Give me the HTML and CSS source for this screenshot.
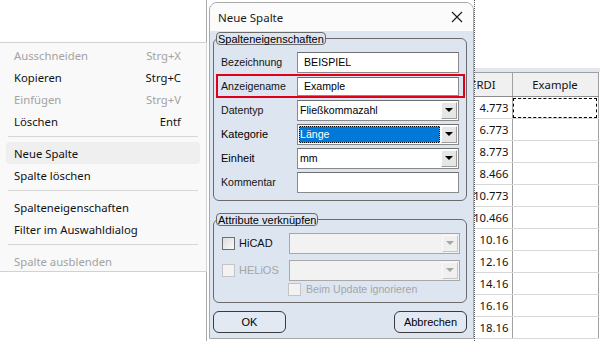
FILE: index.html
```html
<!DOCTYPE html>
<html lang="de">
  <head>
    <meta charset="UTF-8" />
    <title>Neue Spalte</title>
    <link rel="stylesheet" href="styles.css">
  </head>
  <body>
    <div class="desk">
      <div class="vline vline-left"></div>

      <div class="sheet">
        <div class="sheet-bar"></div>
        <table class="grid">
          <thead>
            <tr>
              <th class="col-a">ERDI</th>
              <th class="col-b">Example</th>
            </tr>
          </thead>
          <tbody>
            <tr><td class="col-a">4.773</td><td class="col-b focus"></td></tr>
            <tr><td class="col-a">6.773</td><td class="col-b"></td></tr>
            <tr><td class="col-a">8.773</td><td class="col-b"></td></tr>
            <tr><td class="col-a">8.466</td><td class="col-b"></td></tr>
            <tr><td class="col-a">10.773</td><td class="col-b"></td></tr>
            <tr><td class="col-a">10.466</td><td class="col-b"></td></tr>
            <tr><td class="col-a">10.16</td><td class="col-b"></td></tr>
            <tr><td class="col-a">12.16</td><td class="col-b"></td></tr>
            <tr><td class="col-a">14.16</td><td class="col-b"></td></tr>
            <tr><td class="col-a">16.16</td><td class="col-b"></td></tr>
            <tr><td class="col-a">18.16</td><td class="col-b"></td></tr>
          </tbody>
        </table>
      </div>
      <div class="vline vline-right"></div>

      <div class="menu">
        <div class="item disabled"><span>Ausschneiden</span><span>Strg+X</span></div>
        <div class="item"><span>Kopieren</span><span>Strg+C</span></div>
        <div class="item disabled"><span>Einfügen</span><span>Strg+V</span></div>
        <div class="item"><span>Löschen</span><span>Entf</span></div>
        <div class="sep"></div>
        <div class="item hover"><span>Neue Spalte</span></div>
        <div class="item"><span>Spalte löschen</span></div>
        <div class="sep"></div>
        <div class="item"><span>Spalteneigenschaften</span></div>
        <div class="item"><span>Filter im Auswahldialog</span></div>
        <div class="sep"></div>
        <div class="item disabled"><span>Spalte ausblenden</span></div>
      </div>

      <div class="dialog">
        <div class="titlebar">
          <span class="title">Neue Spalte</span>
          <svg class="close" width="12" height="12" viewBox="0 0 12 12">
            <path d="M1 1 L11 11 M11 1 L1 11" stroke="#1a1a1a" stroke-width="1.1" fill="none" />
          </svg>
        </div>

        <div class="dialog-body">
          <fieldset class="group">
            <legend>Spalteneigenschaften</legend>
            <div class="rows">
              <div class="row">
                <label>Bezeichnung</label>
                <div class="field">BEISPIEL</div>
              </div>
              <div class="row marked">
                <label>Anzeigename</label>
                <div class="field short">Example</div>
              </div>
              <div class="row">
                <label>Datentyp</label>
                <div class="combo">
                  <span class="combo-text">Fließkommazahl</span>
                  <span class="drop"><i></i></span>
                </div>
              </div>
              <div class="row">
                <label class="strong">Kategorie</label>
                <div class="combo">
                  <span class="combo-text selected">Länge</span>
                  <span class="drop"><i></i></span>
                </div>
              </div>
              <div class="row">
                <label class="strong">Einheit</label>
                <div class="combo">
                  <span class="combo-text">mm</span>
                  <span class="drop"><i></i></span>
                </div>
              </div>
              <div class="row">
                <label>Kommentar</label>
                <div class="field"></div>
              </div>
            </div>
          </fieldset>

          <fieldset class="group links">
            <legend>Attribute verknüpfen</legend>
            <div class="rows">
              <div class="row check-row">
                <span class="check"></span>
                <span class="check-label">HiCAD</span>
                <div class="combo wide off">
                  <span class="combo-text"></span>
                  <span class="drop"><i></i></span>
                </div>
              </div>
              <div class="row check-row second">
                <span class="check off"></span>
                <span class="check-label off">HELiOS</span>
                <div class="combo wide off">
                  <span class="combo-text"></span>
                  <span class="drop"><i></i></span>
                </div>
              </div>
              <div class="row update-row">
                <span class="check off"></span>
                <span class="check-label off">Beim Update ignorieren</span>
              </div>
            </div>
          </fieldset>

          <div class="buttons">
            <button>OK</button>
            <button>Abbrechen</button>
          </div>
        </div>
      </div>
    </div>
  </body>
</html>
```

FILE: styles.css
```css
body {
  margin: 0;
  background: #ffffff;
  color: #000;
  font-family: "Segoe UI", "Noto Sans", sans-serif;
}

.desk {
  position: relative;
  width: 600px;
  height: 341px;
  overflow: hidden;
}

.vline {
  position: absolute;
  top: 0;
  bottom: 0;
  width: 1px;
}

.vline-left {
  left: 206px;
  background: #a8a8a8;
}

.vline-right {
  left: 474px;
  border-left: 1px dotted #555;
}

/* table behind the dialog */
.sheet {
  position: absolute;
  left: 430px;
  top: 68px;
  width: 170px;
}

.sheet-bar {
  height: 4px;
  background: #e2e7ef;
}

.grid {
  border-collapse: collapse;
  font-size: 11.3px;
  color: #111;
}

.grid th {
  height: 24px;
  padding: 0;
  background: #f0f0f0;
  font-weight: normal;
  border-top: 1px solid #a0a0a0;
  border-bottom: 1px solid #8c8c8c;
  border-right: 1px solid #a0a0a0;
  box-sizing: border-box;
}

.grid th.col-a {
  text-align: right;
  padding-right: 16px;
}

.grid td {
  height: 21px;
  padding: 0;
  border-bottom: 1px solid #d8d8d8;
  border-right: 1px solid #a0a0a0;
}

.grid td.col-a {
  padding-right: 3px;
}

.col-a {
  width: 82px;
  text-align: right;
  box-sizing: border-box;
}

.col-b {
  width: 85px;
}

.grid td.focus {
  outline: 1px dashed #000;
  outline-offset: -2px;
}

/* context menu */
.menu {
  position: absolute;
  left: 0;
  top: 42px;
  width: 207px;
  height: 230px;
  box-sizing: border-box;
  padding-top: 1px;
  background: #f9f9f9;
  border: 1px solid #d2d2d2;
  border-left: none;
  font-size: 11.3px;
}

.item {
  height: 22px;
  display: flex;
  align-items: center;
  justify-content: space-between;
  padding: 0 25px 0 14px;
  color: #111;
}

.item.disabled {
  color: #a3a3a3;
}

.item.hover {
  margin: 0 6px;
  padding-left: 8px;
  background: #efefef;
  border-radius: 4px;
}

.sep {
  height: 1px;
  margin: 4px 8px 5px;
  background: #d6d6d6;
}

/* dialog */
.dialog {
  position: absolute;
  left: 209px;
  top: 2px;
  width: 265px;
  height: 337px;
  box-sizing: border-box;
  border: 1px solid #a9a9a9;
  border-radius: 8px 8px 0 0;
  background: #dde5f0;
  overflow: hidden;
  font-family: Tahoma, "Liberation Sans", sans-serif;
  font-size: 10.6px;
}

.titlebar {
  height: 28px;
  background: #fbfbfb;
  display: flex;
  align-items: center;
  justify-content: space-between;
  padding: 0 10px 0 8px;
}

.title {
  font-family: "Segoe UI", "Noto Sans", sans-serif;
  font-size: 11.5px;
  color: #1a1a1a;
}

.dialog-body {
  padding: 1px 6px 0 3px;
}

.group {
  margin: 0;
  padding: 0 6px 6px 0;
  border: 1px solid #6b6b6b;
  border-radius: 6px;
}

.group legend {
  margin-left: 2px;
  padding: 0 1px;
  height: 13px;
  line-height: 12px;
  font-size: 11px;
  box-sizing: border-box;
  border: 1px solid #6b6b6b;
  border-radius: 4px;
  background: #dde5f0;
}

.rows {
  padding-top: 5px;
}

.row {
  height: 24px;
  display: flex;
  align-items: center;
  padding-left: 7px;
  box-sizing: border-box;
}

.row label {
  width: 76px;
  flex: none;
  color: #141414;
}

.row label.strong {
  color: #000;
  font-size: 11px;
}

.row.marked {
  margin-left: 2px;
  margin-right: -5px;
  padding-left: 3px;
  border: 2px solid #e10019;
}

.field {
  width: 162px;
  height: 21px;
  box-sizing: border-box;
  border: 1px solid #8a8a8a;
  border-top-color: #6f6f6f;
  background: #fff;
  padding-left: 6px;
  line-height: 19px;
}

.field.short {
  height: 19px;
  line-height: 17px;
}

.combo {
  width: 162px;
  height: 21px;
  box-sizing: border-box;
  border: 1px solid #8a8a8a;
  border-top-color: #6f6f6f;
  background: #fff;
  display: flex;
  padding: 1px;
}

.combo-text {
  flex: 1;
  line-height: 17px;
  padding-left: 1px;
}

.combo-text.selected {
  background: #0078d7;
  color: #fff;
  box-shadow: inset 0 0 0 1px #000;
  outline: 1px dotted #ff9a2e;
  outline-offset: -1px;
  margin-right: 1px;
}

.drop {
  width: 16px;
  box-sizing: border-box;
  background: #e6e6e6;
  border: 1px solid;
  border-color: #fdfdfd #9d9d9d #9d9d9d #fdfdfd;
  display: flex;
  align-items: center;
  justify-content: center;
}

.drop i {
  width: 0;
  height: 0;
  border-left: 4px solid transparent;
  border-right: 4px solid transparent;
  border-top: 4px solid #000;
}

.combo.off {
  background: #f2f2f2;
  border-color: #a8a8a8;
}

.combo.off .drop {
  background: #f0f0f0;
  border-color: #fafafa #c6c6c6 #c6c6c6 #fafafa;
}

.combo.off .drop i {
  border-top-color: #a6a6a6;
}

.combo.wide {
  width: 171px;
  margin-left: auto;
}

.links {
  margin-top: 12px;
}

.check-row {
  padding-left: 8px;
}

.check-row.second {
  margin-top: 3px;
}

.check {
  width: 13px;
  height: 13px;
  box-sizing: border-box;
  border: 1px solid #6f6f6f;
  background: linear-gradient(135deg, #dcdcdc, #fafafa);
}

.check.off {
  border-color: #c4c4c4;
  background: #f2f2f2;
}

.check-label {
  margin-left: 4px;
  color: #111;
  font-size: 11px;
}

.check-label.off {
  color: #a5a5a5;
}

.update-row {
  height: 14px;
  padding-left: 74px;
  margin-top: 0;
}

.update-row .check-label {
  margin-left: 5px;
  font-size: 10.6px;
}

.buttons {
  display: flex;
  justify-content: space-between;
  margin-top: 8px;
}

.buttons button {
  width: 73px;
  height: 22px;
  border: 1px solid #3a3a3a;
  border-radius: 6px;
  background: #e3e9f3;
  font-family: Tahoma, "Liberation Sans", sans-serif;
  font-size: 11px;
  color: #000;
  padding: 0;
}
```
